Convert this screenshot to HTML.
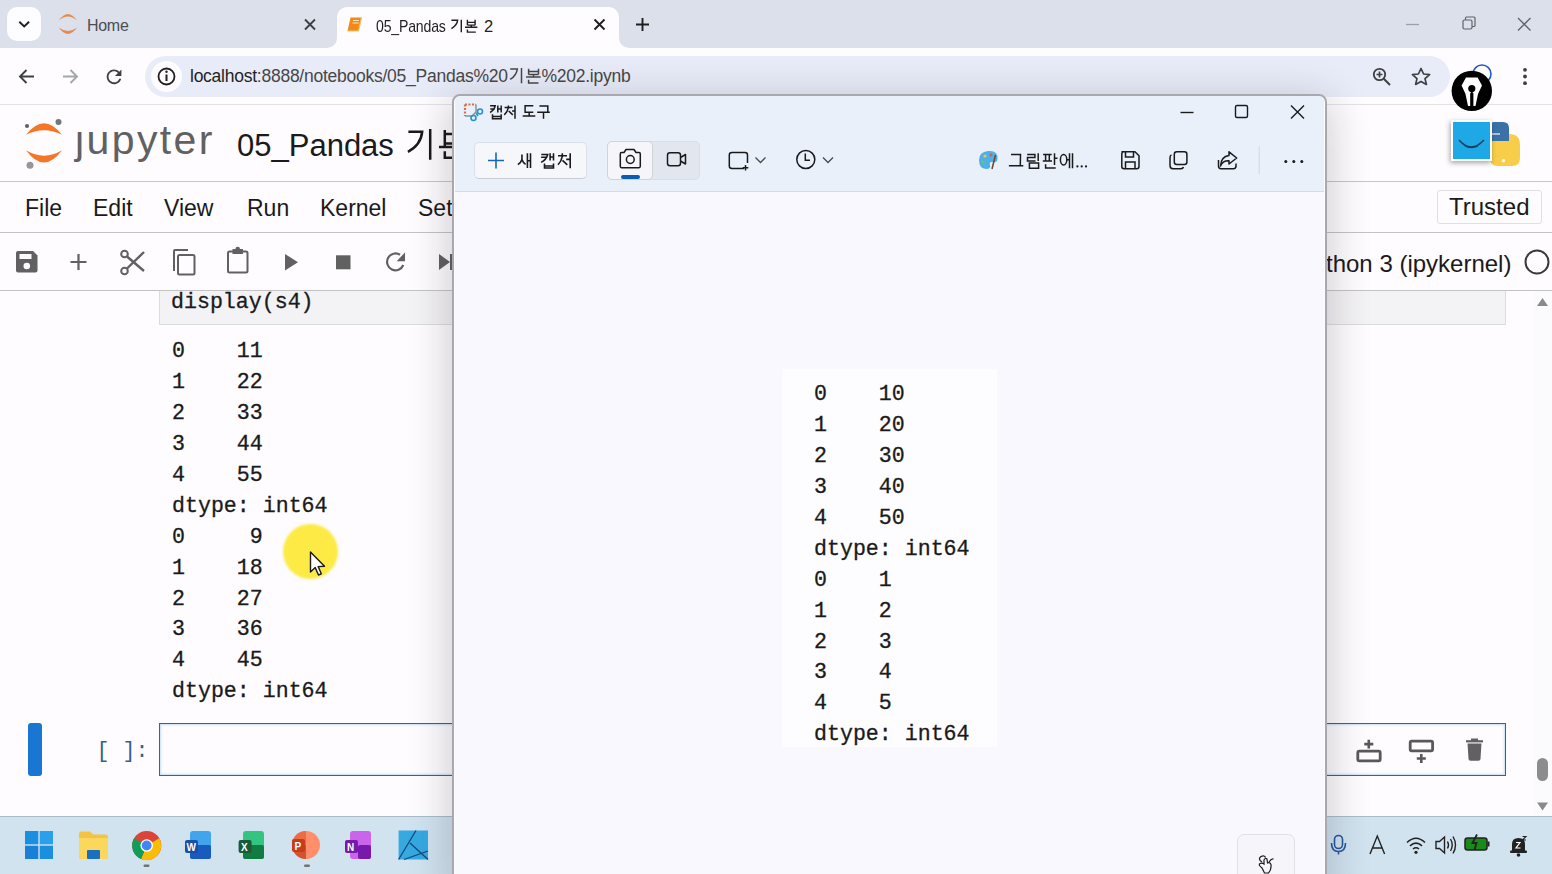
<!DOCTYPE html>
<html><head><meta charset="utf-8">
<style>
*{box-sizing:border-box}
html,body{margin:0;padding:0}
body{width:1552px;height:874px;overflow:hidden;position:relative;background:#fefcfe;font-family:"Liberation Sans",sans-serif;color:#1f1f1f}
.a{position:absolute}
.t{position:absolute;white-space:nowrap;line-height:1}
svg{position:absolute;overflow:visible}
.mono{font-family:"Liberation Mono",monospace;-webkit-text-stroke:0.3px currentColor}
</style></head><body>

<!-- ============ TAB STRIP ============ -->
<div class="a" style="left:0;top:0;width:1552px;height:48px;background:#dbe0ea"></div>
<div class="a" style="left:7px;top:7px;width:34px;height:34px;border-radius:10px;background:#fdfcfe"></div>
<svg style="left:0;top:0" width="50" height="50"><path d="M19.3 21.7 L24.2 26.4 L29.1 21.7" fill="none" stroke="#1f1f1f" stroke-width="1.9"/></svg>
<!-- home tab -->
<svg style="left:0;top:0" width="100" height="50"><path d="M58.8 20.5 Q67.9 7.3 77 20.5 Q67.9 12.7 58.8 20.5Z" fill="#e48a50"/><path d="M58.8 27.5 Q67.9 40.5 77 27.5 Q67.9 34.5 58.8 27.5Z" fill="#e48a50"/></svg>
<div class="t" style="left:87px;top:18px;font-size:16px;color:#4a4e54;letter-spacing:-0.3px">Home</div>
<svg style="left:0;top:0" width="330" height="50"><path d="M305 19.5 L315 29.5 M315 19.5 L305 29.5" stroke="#3c4043" stroke-width="1.9"/></svg>
<!-- active tab -->
<div class="a" style="left:337px;top:7px;width:282px;height:42px;border-radius:10px 10px 0 0;background:#fefcfe"></div>
<div class="a" style="left:327px;top:38px;width:10px;height:10px;background:#fefcfe"></div>
<div class="a" style="left:317px;top:28px;width:20px;height:20px;border-radius:0 0 10px 0;background:#dbe0ea"></div>
<div class="a" style="left:619px;top:38px;width:10px;height:10px;background:#fefcfe"></div>
<div class="a" style="left:619px;top:28px;width:20px;height:20px;border-radius:0 0 0 10px;background:#dbe0ea"></div>
<svg style="left:0;top:0" width="400" height="50"><path d="M350.5 17.5 L361.5 17.5 L358.5 31 L347.5 31Z" fill="#f08a18"/><path d="M347.5 31 L358.5 31 L361.5 17.5" fill="none" stroke="#f6c16a" stroke-width="1.2"/><path d="M353 20.5 L359 20.5 M352.5 23 L358.5 23" stroke="#fde7b8" stroke-width="1.1"/></svg>
<div class="t" style="left:376px;top:18px;font-size:16.2px;color:#1f1f1f;letter-spacing:-0.2px;transform:scaleX(0.87);transform-origin:0 0">05_Pandas</div>
<div class="t" style="left:484px;top:17.5px;font-size:16.5px;color:#1f1f1f">2</div>
<svg style="left:0;top:0" width="600" height="50"><path d="M451.4 20.2 L457.7 20.2 Q457 25.5 451.4 28.7 M461.3 19.7 L461.3 32.3 M467.4 19.7 L467.4 25.3 M475.1 19.7 L475.1 25.3 M467.4 22.4 L475.1 22.4 M467.4 25.1 L475.1 25.1 M471.3 25.3 L471.3 27.3 M465 27.3 L477.4 27.3 M467.4 29.6 L467.4 32.1 L475.8 32.1" fill="none" stroke="#1f1f1f" stroke-width="1.4"/></svg>
<svg style="left:0;top:0" width="620" height="50"><path d="M594.5 19.5 L604.5 29.5 M604.5 19.5 L594.5 29.5" stroke="#1f1f1f" stroke-width="1.9"/></svg>
<svg style="left:0;top:0" width="660" height="50"><path d="M642.5 18 L642.5 31 M636 24.5 L649 24.5" stroke="#1f1f1f" stroke-width="1.9"/></svg>
<!-- window controls -->
<svg style="left:0;top:0" width="1552" height="50"><path d="M1406 24.5 L1419 24.5" stroke="#9aa0a6" stroke-width="1.3"/><rect x="1463" y="20" width="9" height="9" rx="1.5" fill="none" stroke="#5f6368" stroke-width="1.2"/><path d="M1465.5 20 L1465.5 18 Q1465.5 17 1466.5 17 L1474 17 Q1475 17 1475 18 L1475 25.5 Q1475 26.5 1474 26.5 L1472 26.5" fill="none" stroke="#5f6368" stroke-width="1.2"/><path d="M1518 18 L1530.5 30.5 M1530.5 18 L1518 30.5" stroke="#5f6368" stroke-width="1.3"/></svg>

<!-- ============ ADDRESS BAR ============ -->
<div class="a" style="left:0;top:48px;width:1552px;height:57px;background:#fefcfe;border-bottom:1px solid #e3e3e6;border-radius:9px 9px 0 0"></div>
<svg style="left:0;top:0" width="200" height="110"><path d="M34 76.5 L20 76.5 M26.5 70 L20 76.5 L26.5 83" fill="none" stroke="#3c4043" stroke-width="1.9"/><path d="M63 76.5 L77 76.5 M70.5 70 L77 76.5 L70.5 83" fill="none" stroke="#a3a6aa" stroke-width="1.9"/><path transform="translate(103 65.8) scale(0.92)" d="M17.65 6.35C16.2 4.9 14.21 4 12 4c-4.42 0-7.990 3.58-7.99 8s3.57 8 7.99 8c3.73 0 6.84-2.55 7.73-6h-2.08c-.82 2.33-3.04 4-5.65 4-3.31 0-6-2.69-6-6s2.69-6 6-6c1.66 0 3.14.69 4.22 1.78L13 11h7V4l-2.35 2.350z" fill="#3c4043"/></svg>
<div class="a" style="left:145px;top:56px;width:1305px;height:41px;border-radius:21px;background:#e8ecf8"></div>
<div class="a" style="left:151px;top:61px;width:31px;height:31px;border-radius:50%;background:#fefcfe"></div>
<svg style="left:0;top:0" width="200" height="110"><circle cx="166.5" cy="76.5" r="8" fill="none" stroke="#1f1f1f" stroke-width="1.8"/><path d="M166.5 74.5 L166.5 81" stroke="#1f1f1f" stroke-width="2"/><circle cx="166.5" cy="71.7" r="1.2" fill="#1f1f1f"/></svg>
<div class="t" style="left:190px;top:67.5px;font-size:17.5px;color:#1f1f1f;letter-spacing:-0.25px">localhost<span style="color:#474747">:8888/notebooks/05_Pandas%20</span></div>
<div class="t" style="left:541.5px;top:67.5px;font-size:17.5px;color:#474747;letter-spacing:-0.25px">%202.ipynb</div>
<svg style="left:0;top:0" width="600" height="100"><path d="M510.2 69.1 L517.3 69.1 Q516.5 75.5 510.2 79.4 M521.5 68 L521.5 83.3 M528.6 68.8 L528.6 74.6 M538.5 68.8 L538.5 74.6 M528.6 71.6 L538.5 71.6 M528.6 74.4 L538.5 74.4 M533.5 74.4 L533.5 76.9 M526.1 76.9 L540.7 76.9 M528.6 79.7 L528.6 82.9 L538.5 82.9" fill="none" stroke="#474747" stroke-width="1.5"/></svg>
<svg style="left:0;top:0" width="1552" height="110"><circle cx="1379.5" cy="74.5" r="5.7" fill="none" stroke="#3c4043" stroke-width="1.8"/><path d="M1376.5 74.5 L1382.5 74.5 M1379.5 71.5 L1379.5 77.5" stroke="#3c4043" stroke-width="1.7"/><path d="M1383.8 78.8 L1390 85" stroke="#3c4043" stroke-width="2"/><path d="M1421 68.5 L1423.6 74 L1429.6 74.6 L1425 78.6 L1426.4 84.4 L1421 81.4 L1415.6 84.4 L1417 78.6 L1412.4 74.6 L1418.4 74Z" fill="none" stroke="#3c4043" stroke-width="1.7" stroke-linejoin="round"/><circle cx="1525" cy="69.8" r="1.9" fill="#3c4043"/><circle cx="1525" cy="76.5" r="1.9" fill="#3c4043"/><circle cx="1525" cy="83.2" r="1.9" fill="#3c4043"/></svg>


<!-- ============ JUPYTER HEADER ============ -->
<div class="a" style="left:0;top:181px;width:1552px;height:1px;background:#c6c6c8"></div>
<svg style="left:0;top:0" width="240" height="190"><path d="M26 134.8 Q44 111.6 62 134.8 Q44 125.6 26 134.8Z" fill="#f37726"/><path d="M26 150.3 Q44 174.9 62 150.3 Q44 161.1 26 150.3Z" fill="#f37726"/><circle cx="58.5" cy="122" r="3" fill="#767677"/><circle cx="27" cy="126" r="2.1" fill="#616262"/><circle cx="30" cy="165.3" r="3.5" fill="#989798"/></svg>
<div class="t" style="left:75px;top:120px;font-size:41px;color:#616161;letter-spacing:2.4px">jupyter</div>
<div class="a" style="left:76px;top:121px;width:8px;height:8px;background:#fefcfe"></div>
<div class="t" style="left:237px;top:130px;font-size:31px;color:#1a1a1a">05_Pandas</div>
<svg style="left:0;top:0" width="600" height="190"><path d="M408.4 131.7 L422.2 131.7 Q421 145 407.9 151.8 M430.2 128.9 L430.2 159.8 M444.8 130 L444.8 146 M444.8 134 L460 134 M444.8 143.5 L460 143.5 M439 146.9 L470 146.9 M444.8 151.2 L444.8 157.8 L470 157.8" fill="none" stroke="#1a1a1a" stroke-width="2.5"/></svg>
<!-- python + jupyter logo -->
<svg style="left:0;top:0" width="1552" height="190"><path d="M1494 122 L1503 122 Q1509 122 1509 128 L1509 141 L1488 141 L1488 128 Q1488 122 1494 122Z" fill="#3a72a8"/><path d="M1490 134 L1500 134" stroke="#e9eef5" stroke-width="1.3"/><path d="M1509 134 Q1520 134 1520 145 L1520 158 Q1520 166 1512 166 L1498 166 Q1490 166 1490 159 L1490 141 L1509 141Z" fill="#f7cd4a"/><circle cx="1503.5" cy="160.8" r="1.8" fill="#fdf7e0"/></svg>
<div class="a" style="left:1451px;top:120px;width:41px;height:41px;background:#1fa8e6;border:2px solid #fbfdff;box-shadow:-1px 2px 5px rgba(0,0,0,.35)"></div>
<svg style="left:0;top:0" width="1552" height="190"><path d="M1459 140 Q1471 154 1484 140" fill="none" stroke="#17435f" stroke-width="1.6"/><path d="M1465 146 Q1471 149 1478 146" fill="none" stroke="#17435f" stroke-width="1.3"/></svg>

<!-- ============ MENU BAR ============ -->
<div class="a" style="left:0;top:232px;width:1552px;height:1px;background:#c3c3c5"></div>
<div class="t" style="left:25px;top:197px;font-size:23px;color:#1a1a1a">File</div>
<div class="t" style="left:93px;top:197px;font-size:23px;color:#1a1a1a">Edit</div>
<div class="t" style="left:164px;top:197px;font-size:23px;color:#1a1a1a">View</div>
<div class="t" style="left:247px;top:197px;font-size:23px;color:#1a1a1a">Run</div>
<div class="t" style="left:320px;top:197px;font-size:23px;color:#1a1a1a">Kernel</div>
<div class="t" style="left:418px;top:197px;font-size:23px;color:#1a1a1a">Settings</div>
<div class="a" style="left:1437px;top:190px;width:105px;height:34px;border:1px solid #e0e0e0;border-radius:3px;background:#fefcfe"></div>
<div class="t" style="left:1449px;top:195px;font-size:24px;color:#1a1a1a">Trusted</div>

<!-- ============ TOOLBAR ============ -->
<div class="a" style="left:0;top:290px;width:1552px;height:1px;background:#c3c3c5"></div>
<svg style="left:0;top:0" width="460" height="300">
<path d="M18 251 L33 251 L37.5 255.5 L37.5 270.5 Q37.5 272.5 35.5 272.5 L18 272.5 Q16 272.5 16 270.5 L16 253 Q16 251 18 251Z" fill="#616161"/><rect x="19.5" y="254" width="12" height="5" fill="#fefcfe"/><circle cx="26.8" cy="266" r="3.3" fill="#fefcfe"/>
<path d="M78.5 254 L78.5 270 M70.5 262 L86.5 262" stroke="#616161" stroke-width="2.2"/>
<circle cx="124.5" cy="254" r="3.3" fill="none" stroke="#616161" stroke-width="2"/><circle cx="124.5" cy="271" r="3.3" fill="none" stroke="#616161" stroke-width="2"/><path d="M127 256.5 L144 271 M127 268.5 L144 252" stroke="#616161" stroke-width="2.4"/>
<path d="M174 271 L174 251 Q174 250 175 250 L188 250" fill="none" stroke="#616161" stroke-width="2"/><rect x="178" y="255" width="16.5" height="19.5" rx="1.5" fill="none" stroke="#616161" stroke-width="2"/>
<rect x="228" y="251.5" width="19.5" height="21" rx="1.5" fill="none" stroke="#616161" stroke-width="2"/><rect x="232.5" y="249" width="10.5" height="5" fill="#616161"/><circle cx="237.7" cy="249" r="2.3" fill="#616161"/>
<path d="M285 254 L298 262.2 L285 270.4Z" fill="#616161"/>
<rect x="336" y="255.3" width="14.5" height="14" fill="#616161"/>
<path d="M403.3 265 A8.4 8.4 0 1 1 400 254.8" fill="none" stroke="#616161" stroke-width="2.2"/><path d="M405 252.5 L405 261.2 L396.6 261.2Z" fill="#616161"/>
<path d="M439 254 L450 262 L439 270Z" fill="#616161"/><rect x="450" y="254" width="3" height="16" fill="#616161"/>
</svg>
<div class="t" style="left:1298px;top:251.5px;font-size:24px;color:#1a1a1a">Python 3 (ipykernel)</div>
<svg style="left:0;top:0" width="1552" height="300"><circle cx="1537" cy="262" r="11.5" fill="none" stroke="#3a3a3a" stroke-width="2"/></svg>

<!-- ============ NOTEBOOK ============ -->
<div class="a" style="left:159px;top:291px;width:1347px;height:34px;background:#f3f2f4;border:1px solid #dcdcdc;border-top:none"></div>
<div class="t mono" style="left:171px;top:291px;font-size:21.6px;line-height:22px;color:#1a1a1a">display(s4)</div>
<pre class="a mono" style="left:172px;top:336.3px;margin:0;font-size:21.6px;line-height:30.9px;color:#1a1a1a">0    11
1    22
2    33
3    44
4    55
dtype: int64
0     9
1    18
2    27
3    36
4    45
dtype: int64</pre>
<div class="a" style="left:28px;top:723px;width:14px;height:53px;border-radius:3px;background:#1976d2"></div>
<div class="t mono" style="left:96.5px;top:740.5px;font-size:21.6px;color:#36628f;-webkit-text-stroke:0">[ ]:</div>
<div class="a" style="left:159px;top:723px;width:1347px;height:53px;border:1.5px solid #2f65a3;background:#fefcfe;box-shadow:inset 0 0 2px 1px rgba(90,160,230,.35)"></div>
<svg style="left:0;top:0" width="1552" height="820">
<rect x="1357.8" y="751.2" width="22.4" height="9.6" rx="1.5" fill="none" stroke="#595959" stroke-width="2.8"/><path d="M1368.8 739.8 L1368.8 748.5 M1364.3 744.1 L1373.3 744.1" stroke="#595959" stroke-width="2.6"/>
<rect x="1410.2" y="741.2" width="22.4" height="9.6" rx="1.5" fill="none" stroke="#595959" stroke-width="2.8"/><path d="M1421.3 754 L1421.3 763 M1416.8 758.5 L1425.8 758.5" stroke="#595959" stroke-width="2.6"/>
<path d="M1466 741.3 L1483 741.3" stroke="#616161" stroke-width="2.2"/><rect x="1471" y="738.5" width="7" height="3" fill="#616161"/><path d="M1467.5 743.5 L1481.5 743.5 L1480.5 759 Q1480.3 760.7 1478.5 760.7 L1470.5 760.7 Q1468.7 760.7 1468.5 759Z" fill="#616161"/>
</svg>
<!-- scrollbar -->
<div class="a" style="left:1534px;top:291px;width:18px;height:525px;background:#fbfafc"></div>
<svg style="left:0;top:0" width="1552" height="820"><path d="M1537 306 L1542.5 298 L1548 306Z" fill="#8a8a8a"/><path d="M1537 802.5 L1542.5 810.5 L1548 802.5Z" fill="#8a8a8a"/></svg>
<div class="a" style="left:1537px;top:758px;width:11px;height:23px;border-radius:6px;background:#8c8c8c"></div>

<!-- ============ TASKBAR ============ -->
<div class="a" style="left:0;top:816px;width:1552px;height:58px;background:#d0e3ef;border-top:1px solid #a9bccb"></div>

<!-- taskbar icons -->
<svg style="left:0;top:0" width="1552" height="874">
<g><rect x="25" y="831" width="13.3" height="13.3" fill="#1a8fe0"/><rect x="39.7" y="831" width="13.3" height="13.3" fill="#2aa0ea"/><rect x="25" y="845.7" width="13.3" height="13.3" fill="#1a7fd6"/><rect x="39.7" y="845.7" width="13.3" height="13.3" fill="#1a8fe0"/></g>
<g><path d="M79 834 Q79 831.5 81.5 831.5 L90 831.5 L93 834.5 L105.5 834.5 Q108 834.5 108 837 L108 857 Q108 859 106 859 L81 859 Q79 859 79 857Z" fill="#f5c342"/><path d="M79 838 L108 838 L108 857 Q108 859 106 859 L81 859 Q79 859 79 857Z" fill="#fbd85c"/><rect x="87" y="850" width="13" height="9" rx="1" fill="#1b6fc0"/></g>
<g><circle cx="146.7" cy="845.5" r="14.6" fill="#db4437"/><path d="M146.7 845.5 L159.3 838.2 A14.6 14.6 0 0 1 141 859 Z" fill="#fbbc05"/><path d="M146.7 845.5 L141 859 A14.6 14.6 0 0 1 134.1 838.2 Z" fill="#0f9d58"/><circle cx="146.7" cy="845.5" r="6.3" fill="#fff"/><circle cx="146.7" cy="845.5" r="4.9" fill="#4285f4"/></g>
<rect x="143.5" y="864.5" width="6" height="2.5" rx="1.2" fill="#6f7478"/>
<g><rect x="190" y="831" width="21" height="28" rx="3" fill="#41a5ee"/><rect x="190" y="845" width="21" height="14" rx="2" fill="#185abd"/><rect x="185" y="840" width="13" height="13" rx="2" fill="#1a4fa8"/><text x="186.5" y="851" font-size="10" font-weight="bold" fill="#fff" font-family="Liberation Sans">W</text></g>
<g><rect x="243" y="831" width="21" height="28" rx="3" fill="#33c481"/><rect x="243" y="845" width="21" height="14" rx="2" fill="#107c41"/><rect x="238.6" y="840" width="13" height="13" rx="2" fill="#185c37"/><text x="241" y="851" font-size="10" font-weight="bold" fill="#fff" font-family="Liberation Sans">X</text></g>
<g><circle cx="306" cy="845" r="14" fill="#ff8f6b"/><path d="M306 845 L306 831 A14 14 0 0 0 292 845Z" fill="#ed6c47"/><path d="M306 845 L292 845 A14 14 0 0 0 306 859Z" fill="#d35230"/><rect x="292" y="839" width="13" height="13" rx="2" fill="#c43e1c"/><text x="294.5" y="850" font-size="10" font-weight="bold" fill="#fff" font-family="Liberation Sans">P</text></g>
<rect x="304" y="864.5" width="6" height="2.5" rx="1.2" fill="#6f7478"/>
<g><rect x="350" y="831" width="21" height="28" rx="3" fill="#ca64ea"/><rect x="358" y="845" width="13" height="14" rx="2" fill="#7719aa"/><rect x="345" y="840" width="13" height="13" rx="2" fill="#7719aa"/><text x="347" y="851" font-size="10" font-weight="bold" fill="#fff" font-family="Liberation Sans">N</text></g>
<g><rect x="398.6" y="830.5" width="29.4" height="29" fill="#36a9e1"/><path d="M398.6 859.5 L416 830.5 M404 859.5 L428 851 M410 843 L428 859.5" stroke="#0f4a80" stroke-width="1.3" fill="none"/></g>
<!-- tray -->
<rect x="1334.5" y="835.5" width="8" height="13" rx="4" fill="none" stroke="#2457a0" stroke-width="1.6"/><path d="M1331.5 843 Q1331.5 851.5 1338.5 851.5 Q1345.5 851.5 1345.5 843 M1338.5 851.5 L1338.5 854.5" fill="none" stroke="#2457a0" stroke-width="1.6"/>
<path d="M1370 854 L1377.3 836 L1384.6 854 M1372.5 848 L1382 848" fill="none" stroke="#222" stroke-width="1.4"/>
<path d="M1407 842.5 Q1416 834 1425 842.5 M1410 845.8 Q1416 840.5 1422 845.8 M1413 849 Q1416 846.5 1419 849" fill="none" stroke="#222" stroke-width="1.6"/><circle cx="1416" cy="852.3" r="1.6" fill="#222"/>
<path d="M1436 841.5 L1439.5 841.5 L1444.5 837 L1444.5 853 L1439.5 848.5 L1436 848.5Z" fill="none" stroke="#222" stroke-width="1.4"/><path d="M1447.5 841.5 Q1449.5 845 1447.5 848.5 M1450.5 839 Q1454 845 1450.5 851 M1453 836.5 Q1458 845 1453 853.5" fill="none" stroke="#222" stroke-width="1.4"/>
<rect x="1465" y="838" width="22" height="12" rx="2.5" fill="#1a8a1a" stroke="#222" stroke-width="1.5"/><rect x="1487.5" y="841.5" width="2" height="5" fill="#222"/><path d="M1477 834.5 L1472.5 843 L1476.5 843 L1474.5 850" fill="none" stroke="#222" stroke-width="1.8"/>
<path d="M1512 852 L1512 844 Q1512 838 1518.5 838 Q1525 838 1525 844 L1525 852 Z" fill="#222"/><rect x="1510" y="850.5" width="17" height="2.5" rx="1" fill="#222"/><circle cx="1518.5" cy="855" r="1.8" fill="#222"/><path d="M1516 842.5 L1520 842.5 L1516 848 L1520.5 848" fill="none" stroke="#fff" stroke-width="1.2"/><path d="M1522.5 836.5 L1526 836.5 L1522.5 840 L1526 840" fill="none" stroke="#222" stroke-width="1.1"/>
</svg>

<!-- cursor highlight -->
<div class="a" style="left:283px;top:524px;width:55px;height:55px;border-radius:50%;background:#fdea45;filter:blur(1.2px)"></div>
<svg style="left:0;top:0" width="360" height="600"><path d="M310.5 552 L310.5 572 L315.2 567.6 L318.5 575 L321.3 573.8 L318.2 566.6 L324.5 566.2Z" fill="#fefefe" stroke="#1a1a1a" stroke-width="1.4" stroke-linejoin="round"/></svg>

<!-- extension pen nib -->
<svg style="left:0;top:0" width="1552" height="120"><circle cx="1482" cy="74" r="9" fill="none" stroke="#2557c7" stroke-width="1.6"/><circle cx="1471.8" cy="90.9" r="20.2" fill="#000"/><path d="M1466 77.5 L1477.6 77.5 L1482 85.5 L1478 94 L1475.5 106 L1473.4 106 L1473.4 93 L1470.2 93 L1470.2 106 L1468 106 L1465.5 94 L1461.6 85.5Z" fill="#fff"/><circle cx="1471.8" cy="88.6" r="3.6" fill="#000"/><rect x="1470.9" y="90" width="1.8" height="16.5" fill="#000"/></svg>

<!-- ============ SNIP WINDOW ============ -->
<div class="a" style="left:452px;top:93.5px;width:874.5px;height:800px;border-radius:8px;background:#f8f8fe;border:2px solid #a9a8ae;box-shadow:0 8px 40px 4px rgba(30,20,40,.2), inset 0 0 0 1px #fdfdff"></div>
<div class="a" style="left:455px;top:95.5px;width:869px;height:96px;border-radius:6px 6px 0 0;background:#e9f0fa;border-bottom:1.5px solid #d5dbe5"></div>
<!-- snip icon + title -->
<svg style="left:0;top:0" width="600" height="200"><path d="M465 104.5 L476 104.5 M465 104.5 L465 116" stroke="#e06a40" stroke-width="2.2" stroke-dasharray="2 1.5" fill="none"/><path d="M465 116 L472 116 L476 112 L476 104.5" stroke="#8a8f98" stroke-width="1.5" fill="none"/><circle cx="480" cy="111.5" r="2.5" fill="none" stroke="#2196d3" stroke-width="1.6"/><circle cx="473.5" cy="118" r="2.5" fill="none" stroke="#2196d3" stroke-width="1.6"/><path d="M476 113 L478 116" stroke="#2196d3" stroke-width="1.5"/></svg>
<svg style="left:0;top:0" width="600" height="200"><path d="M490.1 105.7 L495.2 105.7 Q494.5 110 490.1 112.5 M490.3 108.9 L494.7 108.9 M497.8 105.5 L497.8 112.5 M501.2 105.5 L501.2 112.5 M497.8 108.9 L501.2 108.9 M492.5 114.2 L492.5 118.8 L501.2 118.8 L501.2 114.2 M492.5 116.6 L501.2 116.6 M508.4 105.5 L508.4 107.2 M504.6 107.4 L512.5 107.4 M508.4 107.7 Q507.5 112 504.3 114.9 M508.7 111 L512.8 114.9 M515 105.5 L515 118.8 M512.1 111 L515 111 M533.3 105.7 L525.1 105.7 L525.1 112.3 L533.3 112.3 M529.2 112.3 L529.2 116 M522.7 116.1 L535.3 116.1 M539.4 106 L547.8 106 L547.8 111.8 M537.2 112.3 L549.8 112.3 M543.5 112.3 L543.5 118.8" fill="none" stroke="#1a1a1a" stroke-width="1.5"/></svg>
<!-- window buttons -->
<svg style="left:0;top:0" width="1552" height="200"><path d="M1180.5 112.5 L1193.5 112.5" stroke="#1a1a1a" stroke-width="1.4"/><rect x="1235.5" y="105.5" width="12" height="12" rx="1.5" fill="none" stroke="#1a1a1a" stroke-width="1.4"/><path d="M1291 105.5 L1304 118.5 M1304 105.5 L1291 118.5" stroke="#1a1a1a" stroke-width="1.4"/></svg>
<!-- new capture button -->
<div class="a" style="left:474px;top:142px;width:113px;height:37px;border-radius:5px;background:#f6f7fb;border:1px solid #dcdfe5;border-bottom-color:#c9ccd3"></div>
<svg style="left:0;top:0" width="600" height="200"><path d="M496 152.5 L496 168.5 M488 160.5 L504 160.5" stroke="#1667b8" stroke-width="1.6"/></svg>
<svg style="left:0;top:0" width="600" height="200"><path d="M521.95 154.5 L521.95 159.4 Q521 162.5 517.9 164.6 M521.95 159.4 Q523 162.5 525.6 164.4 M527.4 153.3 L527.4 168 M530.5 153.3 L530.5 168 M527.4 160.8 L530.5 160.8 M541.3 154.5 L547.7 154.5 Q546.5 159.5 541.1 162.4 M541.1 157.2 L546.8 157.2 M550.1 153.3 L550.1 160.6 M553.5 153.3 L553.5 160.6 M550.1 157 L553.5 157 M544.5 163.5 L544.5 168 L553.5 168 L553.5 163.5 M544.5 166 L553.5 166 M562.3 153.3 L562.3 155 M558 155.8 L567 155.8 M562.3 156.3 Q561.5 161 558 164.8 M562.5 160.3 L567.3 164.8 M570.2 153.3 L570.2 168.2 M566.2 159.4 L570.2 159.4" fill="none" stroke="#1a1a1a" stroke-width="1.6"/></svg>
<!-- segmented -->
<div class="a" style="left:607px;top:141px;width:93px;height:39px;border-radius:5px;background:#e1e6ef;border:1px solid #d9dde5"></div>
<div class="a" style="left:607px;top:141px;width:46px;height:39px;border-radius:5px;background:#f6f6fa;border:1px solid #cfd3da"></div>
<div class="a" style="left:621px;top:175px;width:19px;height:4px;border-radius:2px;background:#0a5db3"></div>
<svg style="left:0;top:0" width="900" height="200">
<path d="M624 152.5 L626 149.5 L634 149.5 L636 152.5 L639 152.5 Q640.3 152.5 640.3 154 L640.3 166.3 Q640.3 167.7 639 167.7 L621.5 167.7 Q620.3 167.7 620.3 166.3 L620.3 154 Q620.3 152.5 621.5 152.5Z" fill="none" stroke="#1a1a1a" stroke-width="1.5" stroke-linejoin="round"/><circle cx="630.3" cy="159.5" r="3.9" fill="none" stroke="#1a1a1a" stroke-width="1.5"/>
<rect x="667.5" y="152.8" width="13" height="13" rx="2.5" fill="none" stroke="#1a1a1a" stroke-width="1.5"/><path d="M680.5 157.5 L685.5 154.5 L685.5 164 L680.5 161" fill="none" stroke="#1a1a1a" stroke-width="1.5" stroke-linejoin="round"/>
<path d="M744 168.5 L732 168.5 Q729.3 168.5 729.3 166 L729.3 155 Q729.3 152.5 732 152.5 L745 152.5 Q747.5 152.5 747.5 155 L747.5 163" fill="none" stroke="#1a1a1a" stroke-width="1.5"/><path d="M745.5 165 L745.5 170.5 M742.7 167.7 L748.3 167.7" stroke="#1a1a1a" stroke-width="1.5"/>
<path d="M755.5 157.5 L760.5 162.5 L765.5 157.5" fill="none" stroke="#4a4a4a" stroke-width="1.3"/>
<circle cx="805.8" cy="159.5" r="9" fill="none" stroke="#1a1a1a" stroke-width="1.5"/><path d="M805.3 153.5 L805.3 160.3 L810 160.3" fill="none" stroke="#1a1a1a" stroke-width="1.5"/>
<path d="M823 157.5 L828 162.5 L833 157.5" fill="none" stroke="#4a4a4a" stroke-width="1.3"/>
</svg>
<!-- right tools -->
<svg style="left:0;top:0" width="1552" height="200">
<path d="M988 151 Q998 150 997.5 159 Q997 163 992.5 162 Q989 161.5 990 165 Q991 169 986 169 Q979 168.5 979 160 Q979 152 988 151Z" fill="#4fb0e8"/><circle cx="985" cy="156" r="1.6" fill="#f2c14e"/><circle cx="991" cy="155" r="1.5" fill="#e25b4a"/><circle cx="983" cy="162" r="1.5" fill="#6cc36a"/><path d="M995.5 155 L992 169" stroke="#6b4a2a" stroke-width="1.6"/>
<path d="M1122 151.8 L1135 151.8 L1139 155.8 L1139 166.5 Q1139 168.7 1136.8 168.7 L1124 168.7 Q1121.8 168.7 1121.8 166.5 L1121.8 154 Q1121.8 151.8 1124 151.8Z" fill="none" stroke="#1a1a1a" stroke-width="1.5" stroke-linejoin="round"/><path d="M1125.5 152 L1125.5 157 L1133.5 157 L1133.5 152 M1125.5 168.5 L1125.5 162 L1135 162 L1135 168.5" fill="none" stroke="#1a1a1a" stroke-width="1.5"/>
<rect x="1174.3" y="151.8" width="12.6" height="12.6" rx="2.5" fill="none" stroke="#1a1a1a" stroke-width="1.5"/><path d="M1171.5 155 Q1170 155.5 1170 157.5 L1170 165.5 Q1170 168.7 1173 168.7 L1181 168.7 Q1183 168.7 1183.5 167" fill="none" stroke="#1a1a1a" stroke-width="1.5"/>
<path d="M1218.5 160 L1218.5 166 Q1218.5 168.7 1221 168.7 L1233.5 168.7 Q1236 168.7 1236 166 L1236 163.5" fill="none" stroke="#1a1a1a" stroke-width="1.5"/><path d="M1229 151.8 L1236.7 158 L1229 164 L1229 160.8 Q1222.5 160.5 1220.5 166 Q1221 156.5 1229 155.5Z" fill="none" stroke="#1a1a1a" stroke-width="1.5" stroke-linejoin="round"/>
<rect x="1258.7" y="146.3" width="1" height="28" fill="#d3d7de"/>
<circle cx="1285.8" cy="161.5" r="1.5" fill="#1a1a1a"/><circle cx="1293.8" cy="161.5" r="1.5" fill="#1a1a1a"/><circle cx="1301.8" cy="161.5" r="1.5" fill="#1a1a1a"/>
</svg>
<svg style="left:0;top:0" width="1552" height="200"><path d="M1011 154.5 L1020.5 154.5 L1020.3 164.9 M1008.9 165.8 L1023.3 165.8 M1027.2 154.5 L1034.9 154.5 L1034.9 157.5 L1027.5 157.5 L1027.5 161 L1035.5 161 M1038.2 153.3 L1038.2 160.9 M1029.4 163 L1038.6 163 L1038.6 168.3 L1029.4 168.3 Z M1043.1 154.5 L1051.7 154.5 M1045.6 154.5 L1045.6 161 M1049.3 154.5 L1049.3 161 M1042.8 161 L1052 161 M1054.5 153.3 L1054.5 164.9 M1054.5 158.2 L1057.5 158.2 M1045.6 164.3 L1045.6 168 L1055.7 168 M1067 159.7 L1069.5 159.7 M1069.5 153.3 L1069.5 168.3 M1072.5 153.3 L1072.5 168.3" fill="none" stroke="#1a1a1a" stroke-width="1.5"/><ellipse cx="1063.6" cy="159.7" rx="3.2" ry="5.2" fill="none" stroke="#1a1a1a" stroke-width="1.5"/><circle cx="1077.4" cy="166.4" r="1.1" fill="#1a1a1a"/><circle cx="1081.7" cy="166.4" r="1.1" fill="#1a1a1a"/><circle cx="1086" cy="166.4" r="1.1" fill="#1a1a1a"/></svg>
<!-- captured image -->
<div class="a" style="left:782px;top:369px;width:215px;height:378px;background:#fdfcfe"></div>
<pre class="a mono" style="left:814px;top:379.3px;margin:0;font-size:21.6px;line-height:30.9px;color:#1a1a1a">0    10
1    20
2    30
3    40
4    50
dtype: int64
0    1
1    2
2    3
3    4
4    5
dtype: int64</pre>
<!-- gesture button -->
<div class="a" style="left:1237px;top:834px;width:58px;height:60px;border-radius:7px;background:#f6f6fa;border:1px solid #e0e1e6"></div>
<svg style="left:0;top:0" width="1552" height="874"><g transform="translate(0 6)"><path d="M1262 862 Q1258 859 1260 857.5 Q1262 856.5 1264 858 L1264 854 Q1265 851.5 1267 853 L1267.5 857 Q1270 856 1271 858.5 Q1271.5 864 1268.5 867 L1264.5 867Z" fill="none" stroke="#1a1a1a" stroke-width="1.2"/><path d="M1262 856 Q1257.5 853 1261 850.5 Q1264.5 849 1265.5 851.5 M1269 856 Q1271.5 852.5 1273.5 853" fill="none" stroke="#1a1a1a" stroke-width="1.2"/></g></svg>

</body></html>
